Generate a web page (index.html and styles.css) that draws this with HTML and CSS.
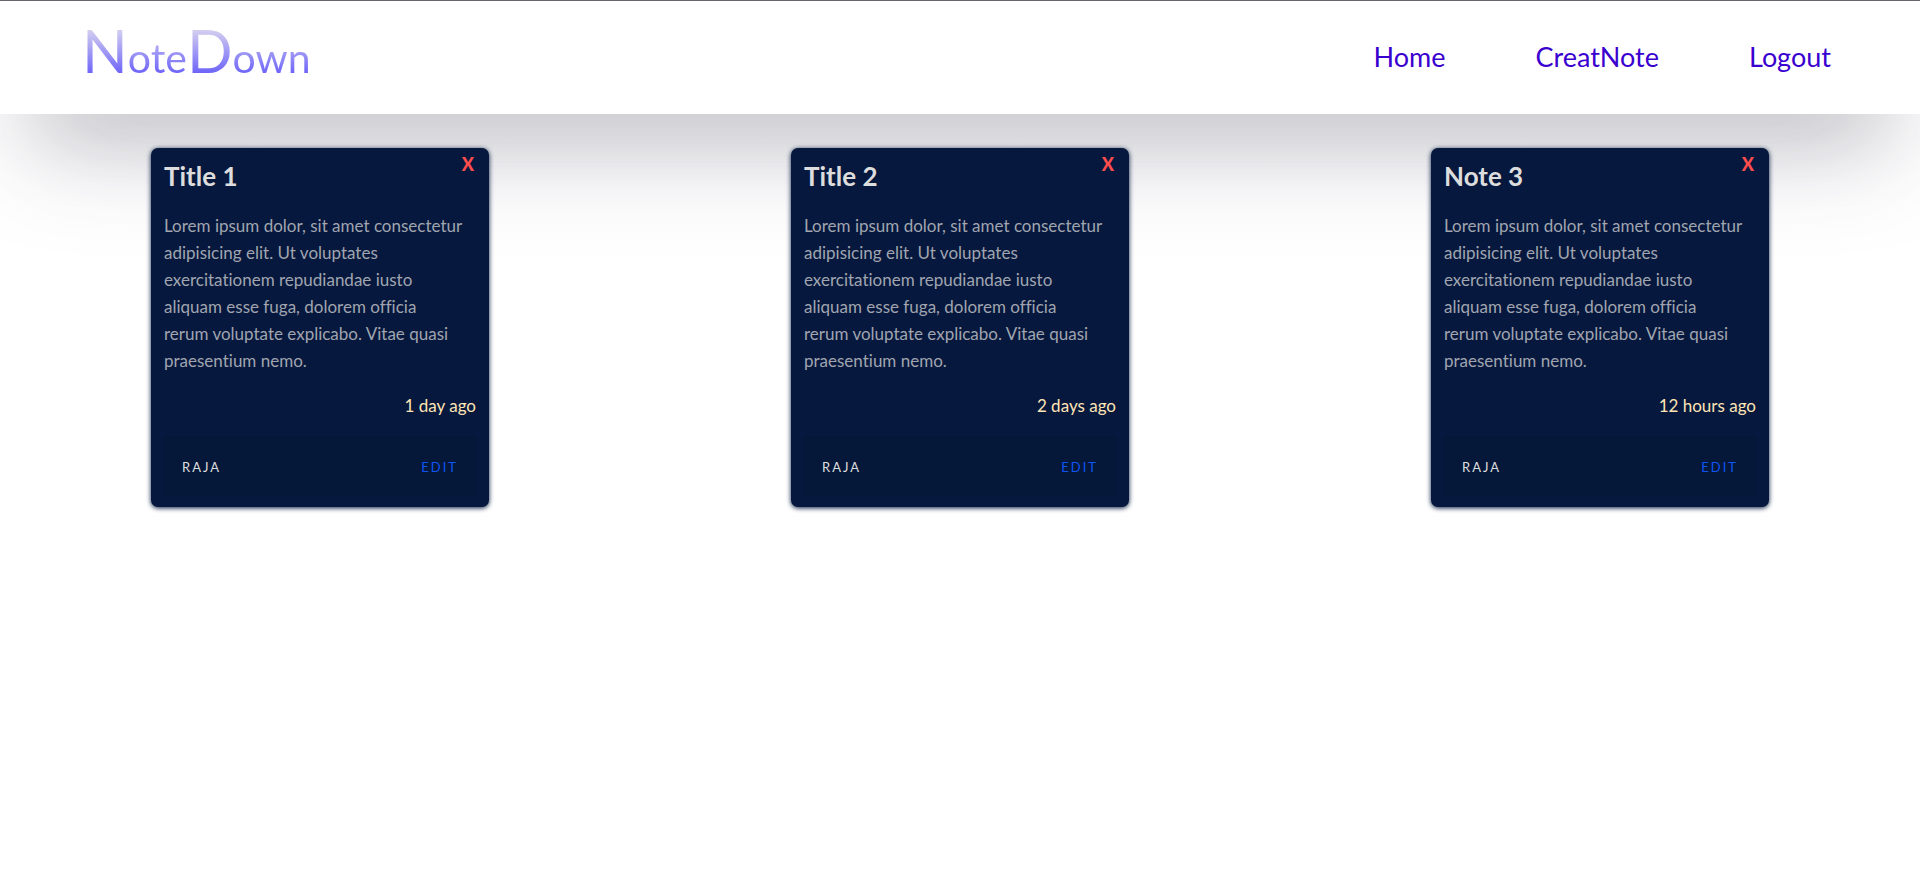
FILE: index.html
```html
<!DOCTYPE html>
<html lang="en">
<head>
<meta charset="utf-8">
<title>NoteDown</title>
<link rel="stylesheet" href="styles.css">
</head>
<body>
<header class="navbar">
  <a class="logo" href="#"><span class="logo-cap">N</span>ote<span class="logo-cap">D</span>own</a>
  <nav class="nav-links">
    <a href="#">Home</a>
    <a href="#">CreatNote</a>
    <a href="#">Logout</a>
  </nav>
</header>
<main class="notes">
  <article class="card">
    <button class="card-close" type="button">X</button>
    <h2 class="card-title">Title 1</h2>
    <p class="card-text">Lorem ipsum dolor, sit amet consectetur adipisicing elit. Ut voluptates<br>exercitationem repudiandae iusto<br>aliquam esse fuga, dolorem officia<br>rerum voluptate explicabo. Vitae quasi praesentium nemo.</p>
    <p class="card-date">1 day ago</p>
    <footer class="card-footer"><span>RAJA</span><a class="card-edit" href="#">EDIT</a></footer>
  </article>
  <article class="card">
    <button class="card-close" type="button">X</button>
    <h2 class="card-title">Title 2</h2>
    <p class="card-text">Lorem ipsum dolor, sit amet consectetur adipisicing elit. Ut voluptates<br>exercitationem repudiandae iusto<br>aliquam esse fuga, dolorem officia<br>rerum voluptate explicabo. Vitae quasi praesentium nemo.</p>
    <p class="card-date">2 days ago</p>
    <footer class="card-footer"><span>RAJA</span><a class="card-edit" href="#">EDIT</a></footer>
  </article>
  <article class="card">
    <button class="card-close" type="button">X</button>
    <h2 class="card-title">Note 3</h2>
    <p class="card-text">Lorem ipsum dolor, sit amet consectetur adipisicing elit. Ut voluptates<br>exercitationem repudiandae iusto<br>aliquam esse fuga, dolorem officia<br>rerum voluptate explicabo. Vitae quasi praesentium nemo.</p>
    <p class="card-date">12 hours ago</p>
    <footer class="card-footer"><span>RAJA</span><a class="card-edit" href="#">EDIT</a></footer>
  </article>
</main>
</body>
</html>
```
FILE: styles.css
```css
* { box-sizing: border-box; }
body {
  margin: 0;
  background: #fff;
  font-family: Lato, "Open Sans", sans-serif;
  font-variant-ligatures: none;
}
a { text-decoration: none; }
.navbar {
  display: flex;
  justify-content: space-between;
  align-items: center;
  padding: 13px 89px 20px 82px;
  border-top: 1px solid #66666c;
  background: #fff;
  box-shadow: 0 54px 110px -26px rgba(50, 50, 93, 0.25), 0 40px 84px -34px rgba(0, 0, 0, 0.25);
}
.logo {
  font-size: 41px;
  line-height: 72px;
  color: transparent;
  background: linear-gradient(#e6e2ee 10%, #6258fa 80%);
  -webkit-background-clip: text;
  background-clip: text;
}
.logo-cap { font-size: 60px; }
.nav-links { display: flex; gap: 90px; padding-top: 6px; }
.nav-links a { color: #3a00d0; font-size: 27px; line-height: 40px; }
.notes {
  display: grid;
  grid-template-columns: repeat(3, 1fr);
  justify-items: center;
  padding: 34px 0;
}
.card {
  position: relative;
  width: 338px;
  padding: 12px 13px;
  border-radius: 7px;
  background: #06183d;
  box-shadow: 0 1px 5px #06183d;
}
.card-close {
  position: absolute;
  top: 5px;
  right: 10px;
  padding: 0 5px;
  border: 0;
  background: none;
  color: #ff4d4d;
  font-family: inherit;
  font-size: 18px;
  line-height: 22px;
  font-weight: 900;
  cursor: pointer;
}
.card-title { margin: 0; color: #ddd; font-size: 26px; line-height: 32px; font-weight: 700; }
.card-text { margin: 20px 0 0; color: #a0a5b0; font-size: 17px; line-height: 27px; }
.card-date { margin: 18px 0; color: #ffe4b5; font-size: 17px; line-height: 27px; text-align: right; }
.card-footer {
  display: flex;
  justify-content: space-between;
  align-items: center;
  height: 58px;
  padding: 0 18px;
  border-top: 1px solid #061533;
  background: #05183a;
  color: #ddd;
  font-size: 13px;
  letter-spacing: 2px;
}
.card-edit { color: #0d55f5; }
```
